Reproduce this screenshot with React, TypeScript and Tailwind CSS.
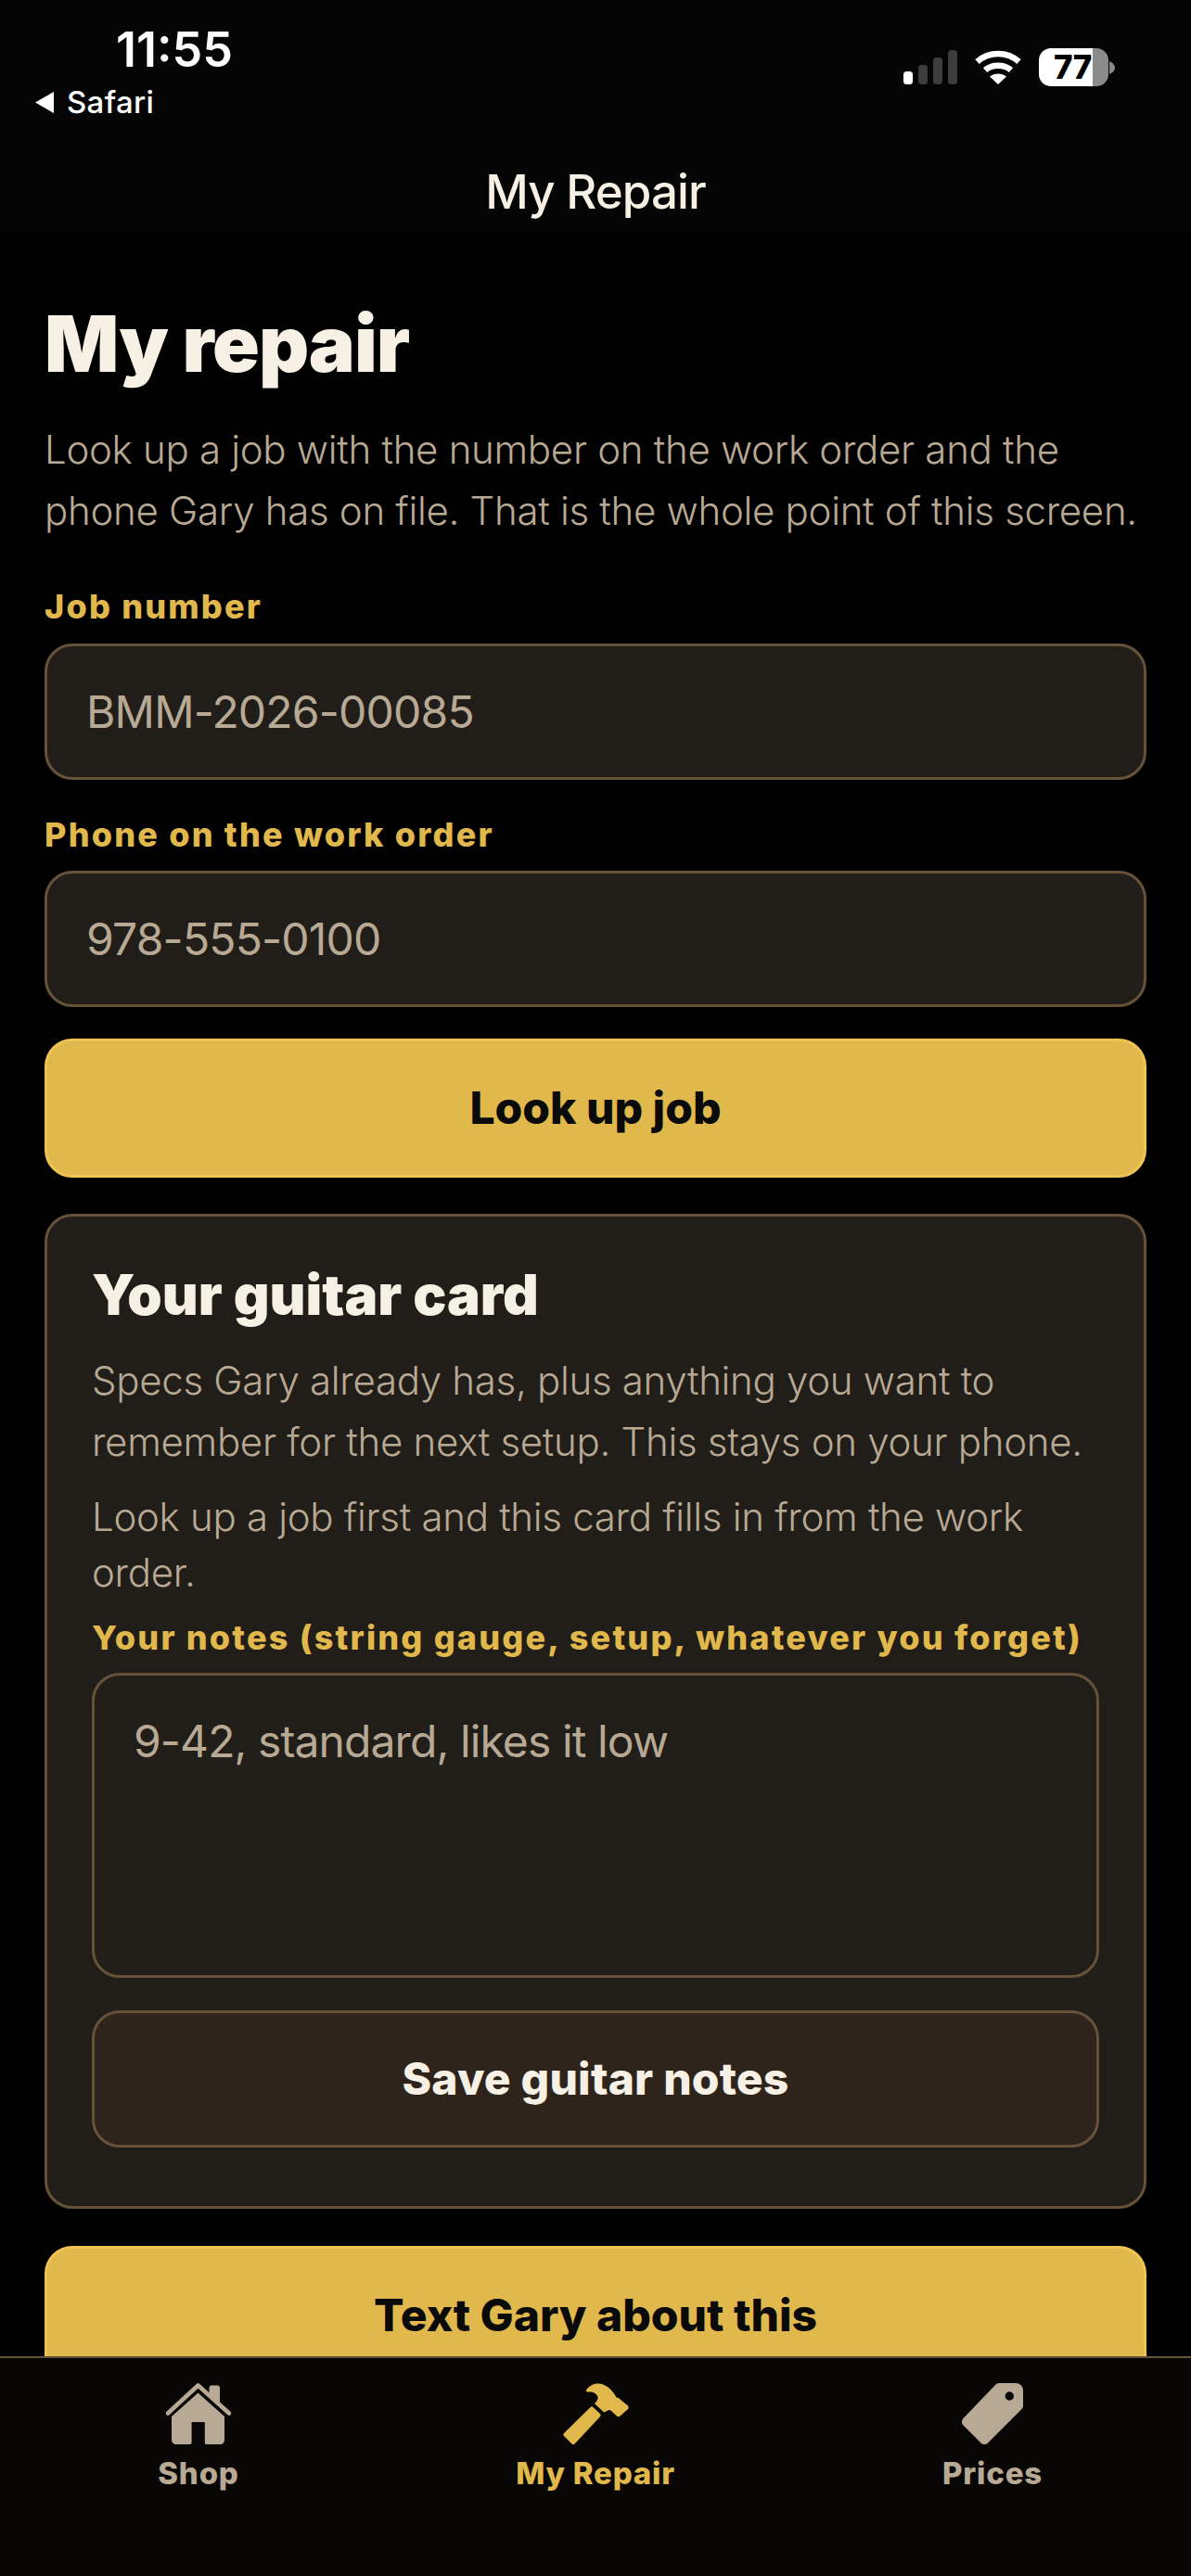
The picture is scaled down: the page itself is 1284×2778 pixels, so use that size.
const GOLD = "#e0b84c";

function Signal() {
  return (
    <svg width="58" height="37" viewBox="0 0 58 37" className="block">
      <rect x="0" y="23" width="10" height="14" rx="3.5" fill="#ffffff" />
      <rect x="16" y="16" width="10" height="21" rx="3.5" fill="#3c3c3c" />
      <rect x="32" y="8" width="10" height="29" rx="3.5" fill="#3c3c3c" />
      <rect x="48" y="0" width="10" height="37" rx="3.5" fill="#3c3c3c" />
    </svg>
  );
}

function Wifi() {
  return (
    <svg width="50" height="37" viewBox="0 0 50 37" className="block">
      <path d="M2.5 12.5C15 1 35 1 47.5 12.5" fill="none" stroke="#fff" strokeWidth="6.5" strokeLinecap="butt" />
      <path d="M11 21.5C18.5 15 31.5 15 39 21.5" fill="none" stroke="#fff" strokeWidth="6.5" strokeLinecap="butt" />
      <path d="M25 37L16 28.5C21 24.5 29 24.5 34 28.5Z" fill="#fff" />
    </svg>
  );
}

function Battery() {
  return (
    <div className="flex items-center gap-[1px]">
      <div className="relative flex h-[41px] w-[75px] overflow-hidden rounded-[13px]">
        <div className="h-full w-[58px] bg-white" />
        <div className="h-full flex-1 bg-[#8b8b8b]" />
        <div className="absolute left-[16px] top-0 text-[35px] font-extrabold leading-[41px] tracking-[-0.5px] text-black">77</div>
      </div>
      <svg width="6" height="14" viewBox="0 0 6 14" className="block">
        <path d="M0 0C4 2 6 4 6 7C6 10 4 12 0 14Z" fill="#8b8b8b" />
      </svg>
    </div>
  );
}

function HouseIcon() {
  return (
    <svg width="70" height="66" viewBox="0 0 70 66" className="block">
      <path d="M46.5 5.5C46.5 3.5 47.5 2.5 49 2.5H55.5C57 2.5 58 3.5 58 5.5V22L46.5 11Z" fill="#b8a994" />
      <path d="M2 32.5L34.5 2.5L68 32.5" fill="none" stroke="#b8a994" strokeWidth="4.6" strokeLinecap="round" strokeLinejoin="round" />
      <path d="M34.5 10.5L63 36V61C63 64 61 66 58 66H43.5C42.5 66 41.8 65.2 41.8 64V42H27.6V64C27.6 65.2 26.8 66 25.8 66H11C8 66 6 64 6 61V36Z" fill="#b8a994" />
    </svg>
  );
}

function HammerIcon() {
  return (
    <svg width="71" height="66" viewBox="0 0 71 66" className="block">
      <path d="M31 28L38 34.5L11 63.5L3 55.5Z" fill={GOLD} stroke={GOLD} strokeWidth="5" strokeLinejoin="round" />
      <path d="M24.5 8.2C28 2.5 33.5 0 39 0.5C47 1.5 54 8 57.5 15.5C59 15.5 60.5 16 61.5 17.5L69.5 24C71 25.5 71 27 70 28L61.5 35.5C60.5 36.5 59 36.5 58 35.5L51.5 29.5C50 28.5 48.5 29 47.5 30L44 31.5L34 22C36 20 38 17.5 37.5 15C36.5 11.5 33 9.5 29 9.5C27 9.5 25.5 9.5 24.5 8.2Z" fill={GOLD} />
    </svg>
  );
}

function TagIcon() {
  return (
    <svg width="66" height="66" viewBox="0 0 66 66" className="block">
      <path
        fillRule="evenodd"
        clipRule="evenodd"
        d="M39.5 0H58C62.5 0 66 3.5 66 8V24.5C66 26 65.5 27 64.5 28L28 64.5C26 66.5 22.5 66.5 20.5 64.5L1.5 45.5C-0.5 43.5 -0.5 40 1.5 38L36.5 1.5C37.5 0.5 38.5 0 39.5 0ZM51.3 9.3A4.7 4.7 0 1 0 51.3 18.7A4.7 4.7 0 1 0 51.3 9.3Z"
        fill="#b8a994"
      />
    </svg>
  );
}

function FieldLabel({ children, className = "" }: { children: React.ReactNode; className?: string }) {
  return (
    <label className={`block text-[36px] font-extrabold leading-[48px] tracking-[2.2px] text-[#e0b84c] ${className}`}>
      {children}
    </label>
  );
}

function Field({ placeholder }: { placeholder: string }) {
  return (
    <input
      placeholder={placeholder}
      className="block h-[147px] w-full rounded-[30px] border-[3px] border-[#665238] bg-[#211e19] px-[42px] text-[48px] tracking-[-0.8px] text-[#f7f0e4] outline-none placeholder:text-[#b8a994]"
    />
  );
}

function PrimaryButton({ children, className = "" }: { children: React.ReactNode; className?: string }) {
  return (
    <button className={`block h-[150px] w-full shrink-0 rounded-[30px] border-[3px] border-[#f0c452] bg-[#e0b84c] text-center text-[48px] font-extrabold tracking-[0px] text-[#0a0a0a] ${className}`}>
      {children}
    </button>
  );
}

function Tab({ icon, label, active = false }: { icon: React.ReactNode; label: string; active?: boolean }) {
  return (
    <div className={`flex flex-col items-center pt-[27px] ${active ? "text-[#e0b84c]" : "text-[#b8a994]"}`}>
      {icon}
      <span className="mt-[10px] text-[33px] font-extrabold leading-[42px] tracking-[0.8px]">{label}</span>
    </div>
  );
}

export default function App() {
  return (
    <div className="flex h-[2778px] w-[1284px] flex-col overflow-hidden bg-black font-['Inter',sans-serif]">
      <header className="h-[249px] shrink-0 bg-[#050505]">
        <div className="flex h-[177px] items-start justify-between pl-[38px] pr-[82px]">
          <div>
            <div className="mt-[25px] pl-[87px] text-[52px] font-semibold leading-[58px] text-white">11:55</div>
            <div className="mt-[6px] flex items-center gap-[14px]">
              <svg width="20" height="23" viewBox="0 0 20 23" className="block">
                <path d="M20 0V23L0 11.5Z" fill="#fff" />
              </svg>
              <span className="text-[33px] font-medium leading-[42px] tracking-[0.3px] text-white">Safari</span>
            </div>
          </div>
          <div className="mt-[52px] flex items-center gap-[19px]">
            <Signal />
            <Wifi />
            <Battery />
          </div>
        </div>
        <div className="text-center text-[51px] font-medium leading-[60px] tracking-[-0.9px] text-[#f7f0e4]">My Repair</div>
      </header>

      <main className="min-h-0 flex-1 overflow-hidden px-[48px]">
        <h1 className="mt-[74px] text-[84px] font-black leading-[96px] tracking-[-1.1px] text-[#f7f0e4]">My repair</h1>
        <p className="mt-[33px] text-[42px] font-[350] leading-[66px] tracking-[-0.3px] text-[#b8a994]">
          Look up a job with the number on the work order and the phone Gary has on file. That is the whole point of this screen.
        </p>

        <FieldLabel className="mb-[16px] mt-[46px]">Job number</FieldLabel>
        <Field placeholder="BMM-2026-00085" />
        <FieldLabel className="mb-[15px] mt-[35px]">Phone on the work order</FieldLabel>
        <Field placeholder="978-555-0100" />
        <PrimaryButton className="mt-[34px]">Look up job</PrimaryButton>

        <section className="mt-[39px] rounded-[30px] border-[3px] border-[#665238] bg-[#211e19] px-[48px] pb-[63px] pt-[48px]">
          <h2 className="text-[60px] font-black leading-[72px] tracking-[0px] text-[#f7f0e4]">Your guitar card</h2>
          <p className="mt-[24px] text-[42px] font-[350] leading-[66px] tracking-[-0.3px] text-[#b8a994]">
            Specs Gary already has, plus anything you want to remember for the next setup. This stays on your phone.
          </p>
          <p className="mt-[18px] text-[42px] font-[350] leading-[60px] tracking-[-0.3px] text-[#b8a994]">
            Look up a job first and this card fills in from the work order.
          </p>
          <FieldLabel className="mb-[14px] mt-[16px]">Your notes (string gauge, setup, whatever you forget)</FieldLabel>
          <textarea
            placeholder="9-42, standard, likes it low"
            className="block h-[329px] w-full resize-none rounded-[30px] border-[3px] border-[#665238] bg-[#211e19] px-[42px] py-[42px] text-[48px] leading-[58px] tracking-[-0.9px] text-[#f7f0e4] outline-none placeholder:text-[#b8a994]"
          />
          <button className="mt-[35px] block h-[148px] w-full rounded-[30px] border-[3px] border-[#665238] bg-[#2e241c] text-center text-[48px] font-extrabold tracking-[0.2px] text-[#f7f0e4]">
            Save guitar notes
          </button>
        </section>

        <PrimaryButton className="mt-[40px]">Text Gary about this</PrimaryButton>
      </main>

      <nav className="grid h-[237px] shrink-0 grid-cols-3 border-t-[2px] border-[#665238] bg-[#080706]">
        <Tab icon={<HouseIcon />} label="Shop" />
        <Tab icon={<HammerIcon />} label="My Repair" active />
        <Tab icon={<TagIcon />} label="Prices" />
      </nav>
    </div>
  );
}
